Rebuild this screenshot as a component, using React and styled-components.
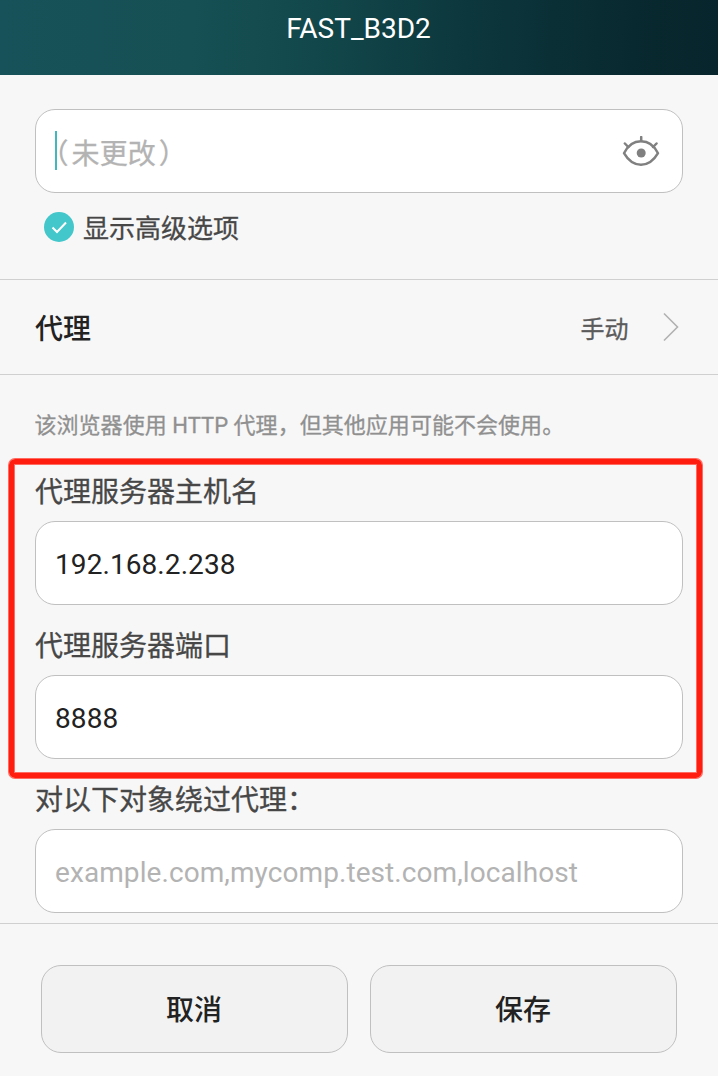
import React from 'react';
import styled, { createGlobalStyle } from 'styled-components';

const GlobalStyle = createGlobalStyle`
  * { box-sizing: border-box; }
  body {
    margin: 0;
    background: #f7f7f7;
    font-family: Roboto, "Noto Sans CJK SC", sans-serif;
  }
`;

const Screen = styled.main`
  display: flex;
  flex-direction: column;
  width: 718px;
  height: 1076px;
  overflow: hidden;
  background: #f7f7f7;
`;

const TitleBar = styled.header`
  height: 75px;
  padding: 12px 1px 0 0;
  background: linear-gradient(93deg, #17525a 0%, #165054 27%, #12484b 44%, #0c373d 65%, #08292f 88%, #07252c 100%);
  color: #fff;
  font-size: 28px;
  line-height: 34px;
  text-align: center;
`;

const PasswordSection = styled.section`
  height: 205px;
  padding: 34px 35px 0;
  border-bottom: 1px solid #d0d0d0;
`;

const InputBox = styled.div`
  display: flex;
  align-items: center;
  justify-content: space-between;
  height: 84px;
  padding: 3px 22px 0 19px;
  border: 1px solid #c0c0c0;
  border-radius: 20px;
  background: #fff;
  color: ${(p) => (p.$placeholder ? '#b3b3b3' : '#222')};
  font-size: 28px;
  line-height: 40px;
  letter-spacing: 0.08px;
`;

const PasswordValue = styled.div`
  display: flex;
  align-items: center;
  padding-top: 1px;
`;

const Caret = styled.span`
  width: 2px;
  height: 39px;
  margin-top: -6px;
  background: #3fb9bd;
`;

const PasswordHint = styled.span`
  display: flex;
  padding-top: 3px;
  margin-bottom: -1px;
  font-feature-settings: "halt";
  -webkit-text-stroke: 0.3px;
`;

const Paren = styled.span`
  margin-left: ${(p) => p.$left}px;
  margin-right: ${(p) => p.$right}px;
`;

const CheckRow = styled.div`
  display: flex;
  align-items: center;
  gap: 9px;
  height: 40px;
  margin-top: 14px;
  padding-left: 9px;
  color: #474747;
  font-size: 26px;
  line-height: 36px;
`;

const CheckLabel = styled.span`
  padding-top: 3px;
  -webkit-text-stroke: 0.3px;
`;

const ProxyRow = styled.section`
  display: flex;
  align-items: center;
  height: 95px;
  padding: 0 39px 0 35px;
  border-bottom: 1px solid #d0d0d0;
`;

const ProxyLabel = styled.div`
  flex: 1;
  padding-bottom: 1px;
  color: #222;
  font-size: 28px;
  font-weight: 500;
`;

const ProxyValue = styled.div`
  margin-right: 33.500px;
  color: #5b5b5b;
  font-size: 24px;
  -webkit-text-stroke: 0.3px;
`;

const Hint = styled.p`
  height: 84px;
  margin: 0;
  padding: 35px 34.500px 0;
  color: #909090;
  font-size: 22px;
  line-height: 32px;
  letter-spacing: 0.04px;
  white-space: nowrap;
  -webkit-text-stroke: 0.3px;
`;

const Highlight = styled.section`
  height: 319px;
  margin: 0 16px 0 9px;
  padding: 0 14px 0 21px;
  border: 5px solid #ff1d10;
  border-radius: 6px;
  box-shadow: 0 0 0 1px #ff6b61, inset 0 0 0 1px #ff6b61;
`;

const Field = styled.div`
  height: 154px;
`;

const FieldLabel = styled.div`
  height: 57px;
  color: #474747;
  font-size: 28px;
  line-height: 57px;
  -webkit-text-stroke: 0.3px;
`;

const BypassField = styled.section`
  height: 151px;
  margin-top: -6px;
  padding: 0 35px;
`;

const Actions = styled.footer`
  display: flex;
  gap: 22px;
  height: 153px;
  padding: 41px 41px 0;
  border-top: 1px solid #d0d0d0;
`;

const ActionButton = styled.button`
  flex: 1;
  height: 88px;
  padding: 0 1px 3px 0;
  border: 1px solid #c0c0c0;
  border-radius: 20px;
  background: #f2f2f2;
  color: #222;
  font-family: inherit;
  font-size: 28px;
  font-weight: 500;
`;

const EyeIcon = () => (
  <svg width="38" height="34" viewBox="0 0 38 34" fill="none" stroke="#808080" strokeWidth="2.5" strokeLinecap="round">
    <path d="M2 17.200C6 9 12 5.200 19 5.200S32 9 36 17.200C31.500 25 25.500 28.800 19 28.800S6.500 25 2 17.200Z" strokeLinejoin="round" />
    <path d="M19.200 1V5M2.900 7.500L6.300 11M34.500 7.500L31.100 11" />
    <circle cx="19.200" cy="17" r="4.500" fill="#808080" stroke="none" />
  </svg>
);

const CheckIcon = () => (
  <svg width="30" height="30" viewBox="0 0 30 30" fill="none">
    <circle cx="15" cy="15" r="15" fill="#43c7cb" />
    <path d="M8.500 15.500L13 20L22 10.500" stroke="#fff" strokeWidth="2" />
  </svg>
);

const ChevronIcon = () => (
  <svg width="17" height="30" viewBox="0 0 17 30" fill="none">
    <path d="M2 1.500L15.500 15L2 28.500" stroke="#b1b1b1" strokeWidth="1.600" />
  </svg>
);

export default function App() {
  return (
    <>
      <GlobalStyle />
      <Screen lang="zh-CN">
        <TitleBar>FAST_B3D2</TitleBar>
        <PasswordSection>
          <InputBox $placeholder>
            <PasswordValue>
              <Caret />
              <PasswordHint>
                <Paren $left={-2.5} $right={3}>（</Paren>
                未更改
                <Paren $left={3} $right={0}>）</Paren>
              </PasswordHint>
            </PasswordValue>
            <EyeIcon />
          </InputBox>
          <CheckRow>
            <CheckIcon />
            <CheckLabel>显示高级选项</CheckLabel>
          </CheckRow>
        </PasswordSection>
        <ProxyRow>
          <ProxyLabel>代理</ProxyLabel>
          <ProxyValue>手动</ProxyValue>
          <ChevronIcon />
        </ProxyRow>
        <Hint>该浏览器使用 HTTP 代理，但其他应用可能不会使用。</Hint>
        <Highlight>
          <Field>
            <FieldLabel>代理服务器主机名</FieldLabel>
            <InputBox>192.168.2.238</InputBox>
          </Field>
          <Field>
            <FieldLabel>代理服务器端口</FieldLabel>
            <InputBox>8888</InputBox>
          </Field>
        </Highlight>
        <BypassField>
          <FieldLabel>对以下对象绕过代理：</FieldLabel>
          <InputBox $placeholder>example.com,mycomp.test.com,localhost</InputBox>
        </BypassField>
        <Actions>
          <ActionButton>取消</ActionButton>
          <ActionButton>保存</ActionButton>
        </Actions>
      </Screen>
    </>
  );
}
